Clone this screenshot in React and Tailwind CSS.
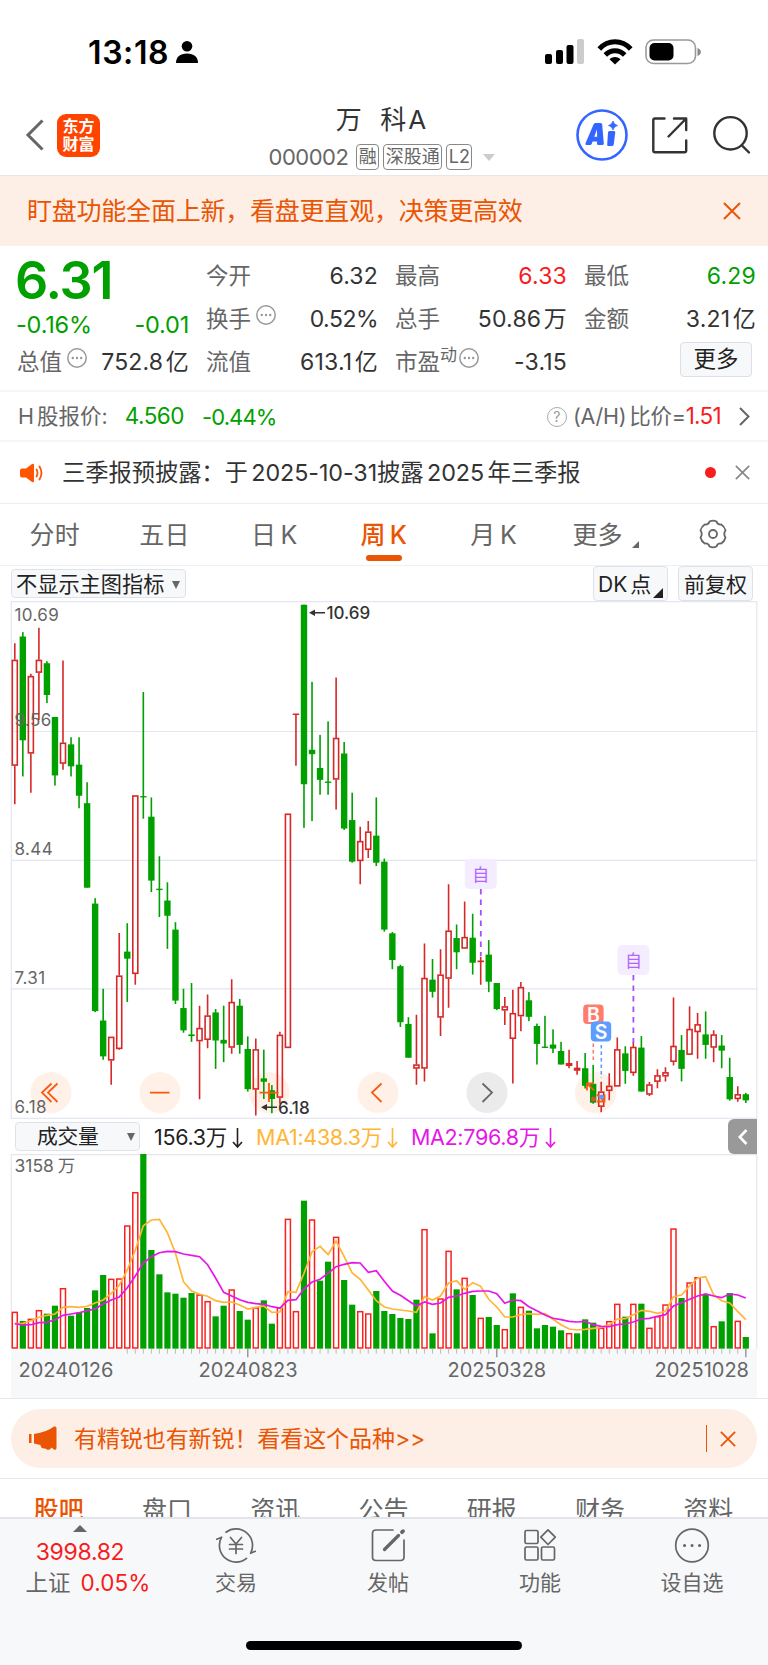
import clsx from "clsx";

const STEP = 8.033;
const FIRST_X = 14.8;

// [up, high, bodyTop, bodyBottom, low]
const CANDLES = [
  [1, 128, 177, 490, 604], [0, 95, 108, 415, 522], [1, 218, 225, 454, 570], [1, 82, 177, 215, 355],
  [0, 181, 187, 281, 305], [0, 346, 346, 519, 549], [1, 179, 422, 484, 502], [0, 406, 427, 492, 522],
  [0, 406, 487, 579, 616], [0, 539, 601, 851, 851], [0, 882, 898, 1216, 1219], [0, 1150, 1244, 1350, 1360],
  [1, 1292, 1292, 1362, 1434], [1, 985, 1111, 1328, 1330], [0, 956, 1040, 1061, 1189], [1, 578, 578, 1106, 1138],
  [0, 272, 580, 584, 647], [0, 584, 641, 830, 864], [0, 758, 854, 858, 938], [0, 835, 889, 934, 1032],
  [0, 953, 975, 1185, 1195], [0, 1150, 1207, 1273, 1280], [0, 1133, 1285, 1290, 1307], [1, 1200, 1266, 1305, 1477],
  [1, 1167, 1229, 1301, 1326], [0, 1210, 1220, 1303, 1387], [0, 1200, 1301, 1312, 1367], [1, 1122, 1189, 1324, 1342],
  [0, 1180, 1200, 1316, 1342], [0, 1291, 1328, 1447, 1454], [1, 1297, 1329, 1448, 1525], [0, 1330, 1415, 1425, 1476],
  [0, 1435, 1450, 1476, 1518], [1, 1277, 1286, 1472, 1490], [1, 632, 632, 1325, 1325], [1, 338, 338, 338, 490],
  [0, 14, 14, 545, 674], [0, 242, 443, 456, 654], [0, 399, 497, 532, 576], [0, 359, 537, 541, 576],
  [1, 229, 408, 531, 620], [0, 420, 454, 676, 680], [0, 570, 651, 774, 777], [1, 671, 713, 772, 841],
  [1, 654, 685, 739, 763], [0, 584, 697, 777, 787], [0, 765, 774, 975, 981], [0, 982, 986, 1065, 1092],
  [0, 1079, 1083, 1249, 1263], [0, 1234, 1254, 1354, 1354], [1, 1227, 1374, 1386, 1434], [1, 1016, 1118, 1386, 1424],
  [0, 1062, 1123, 1159, 1176], [1, 1033, 1108, 1235, 1290], [1, 841, 978, 1120, 1206], [0, 960, 1000, 1042, 1092],
  [1, 892, 997, 1031, 1031], [0, 928, 999, 1073, 1108], [1, 1055, 1069, 1069, 1138], [0, 1006, 1049, 1129, 1160],
  [0, 1133, 1133, 1210, 1213], [1, 1174, 1202, 1214, 1257], [1, 1153, 1222, 1298, 1430], [1, 1130, 1145, 1231, 1276],
  [0, 1160, 1184, 1233, 1246], [0, 1253, 1260, 1313, 1374], [0, 1230, 1321, 1325, 1325], [0, 1270, 1315, 1327, 1340],
  [0, 1307, 1334, 1374, 1374], [1, 1330, 1370, 1378, 1385], [1, 1364, 1384, 1392, 1404], [0, 1340, 1385, 1437, 1445],
  [0, 1375, 1431, 1487, 1490], [1, 1425, 1454, 1499, 1515], [1, 1400, 1437, 1452, 1480], [1, 1294, 1329, 1439, 1439],
  [0, 1320, 1341, 1393, 1431], [1, 1308, 1322, 1399, 1407], [0, 1290, 1324, 1454, 1454], [1, 1426, 1433, 1463, 1467],
  [1, 1388, 1406, 1425, 1444], [1, 1382, 1397, 1409, 1424], [1, 1176, 1319, 1366, 1377], [0, 1287, 1331, 1387, 1424],
  [1, 1202, 1269, 1345, 1345], [1, 1222, 1255, 1278, 1357], [0, 1217, 1285, 1316, 1357], [1, 1273, 1285, 1324, 1367],
  [0, 1287, 1318, 1333, 1385], [0, 1354, 1411, 1477, 1481], [1, 1438, 1462, 1476, 1484], [0, 1458, 1462, 1480, 1488],
];

// positive: up week, negative: down week
const VOLUMES = [
  605, -633, 626, 600, -611, -587, 534, -617, -608, -594, -541, -495, 506, 505, 346, 246, -132, -420, -493, -547,
  -551, -563, -549, 553, 573, -619, -587, 538, -603, -629, 592, -571, -641, 592, 326, 603, -272, 328, -512, -455,
  380, -510, -584, 603, 610, -543, -603, -612, -624, -627, -569, 357, -670, 565, 422, -538, 503, -555, 623, -621,
  -645, 657, -550, 590, -602, -655, -645, -650, -661, 669, -670, -628, -638, 653, 633, 581, -620, 581, -581, 653,
  618, 583, 355, -564, 517, 501, -552, 648, -634, -549, 632, -681,
];

const MA1 = [
  641, 640, 632, 622, 616, 612, 592, 590, 592, 589, 579, 570, 550, 526, 480, 420, 347, 330, 328, 368, 430, 515, 543,
  553, 559, 572, 577, 576, 585, 597, 592, 588, 607, 606, 545, 547, 490, 425, 409, 434, 393, 440, 489, 508, 540, 572,
  591, 597, 600, 603, 607, 560, 570, 558, 519, 512, 538, 518, 529, 568, 591, 621, 621, 614, 611, 613, 611, 628, 644,
  657, 660, 658, 655, 652, 644, 627, 626, 614, 601, 604, 610, 604, 560, 555, 528, 504, 500, 555, 572, 579, 605, 629,
];

const MA2 = [
  641, 645, 644, 638, 637, 629, 616, 612, 608, 602, 597, 582, 570, 561, 533, 498, 459, 440, 428, 424, 425, 432, 436,
  440, 464, 504, 547, 558, 569, 577, 581, 583, 590, 594, 571, 569, 537, 516, 508, 490, 470, 463, 458, 459, 487, 482,
  514, 543, 556, 572, 588, 576, 583, 579, 562, 558, 550, 544, 543, 543, 551, 580, 570, 572, 590, 602, 615, 625, 629,
  634, 636, 634, 644, 649, 650, 644, 642, 636, 627, 625, 619, 614, 588, 578, 568, 558, 552, 558, 563, 552, 555, 564,
];

const cx = (i) => FIRST_X + i * STEP;
const priceY = (v) => v / 2.958;
const volY = (v) => v / 3 - 44;

function StatusBar() {
  return (
    <div className="flex h-[104px] items-center justify-between pl-[88px] pr-[66px]">
      <div className="flex items-center gap-[7px]">
        <span className="pt-0.5 text-[32px] font-semibold tracking-[0.600px] text-black">13:18</span>
        <svg className="h-6 w-[22px]" viewBox="0 0 22 24">
          <circle cx="11" cy="6.2" r="5.3" />
          <path d="M0 23C0 17 4 13.500 11 13.500S22 17 22 23Z" />
        </svg>
      </div>
      <svg className="h-[26px] w-[157px]" viewBox="545 39 157 26">
        <rect x="545" y="54" width="7" height="10" rx="2" />
        <rect x="556" y="50" width="7" height="14" rx="2" />
        <rect x="566.500" y="45" width="7" height="19" rx="2" />
        <rect x="577" y="39" width="7" height="25" rx="2" fill="#ccc" />
        <g fill="none" stroke="#000" strokeWidth="5">
          <path d="M599.300 49C608 39.400 622 39.400 630.700 49" />
          <path d="M605.300 55C611 49.400 619 49.400 624.700 55" />
        </g>
        <path d="M609.500 59.300C613 56.300 617 56.300 620.500 59.300L615 64.500Z" />
        <rect x="646" y="40" width="49.500" height="23.500" rx="7.500" fill="none" stroke="#999" strokeWidth="1.600" />
        <rect x="649.500" y="43" width="24" height="17.500" rx="5" />
        <path d="M697.500 48C702 49.500 702 54.500 697.500 56Z" fill="#888" />
      </svg>
    </div>
  );
}

function Badge({ children }) {
  return (
    <span className="flex h-[26px] items-center rounded-[4px] border-[1.500px] border-[#888] px-[1.500px] text-[18px] text-[#666]">
      {children}
    </span>
  );
}

function Header() {
  return (
    <header className="flex h-[72px] items-center justify-between border-b border-[#e5e7ea] pl-[25px] pr-[17px]">
      <div className="flex w-[163px] items-center gap-[13px] pb-[9px]">
        <svg className="h-8 w-[19px]" viewBox="0 0 19 32" fill="none" stroke="#666" strokeWidth="3">
          <path d="M17.500 1.500L3 16L17.500 30.500" />
        </svg>
        <div className="flex h-[43px] w-[43px] flex-col items-center justify-center gap-[1.500px] rounded-[9px] bg-[#ff4400] text-[16px] font-bold text-white">
          <span>东方</span>
          <span>财富</span>
        </div>
      </div>
      <div className="flex flex-col items-center gap-[11px] pb-[2px]">
        <h1 className="text-[26px] tracking-[2px] text-[#333] [word-spacing:-1px]">万&nbsp; 科A</h1>
        <div className="flex items-center gap-1">
          <span className="mr-1 text-[22px] tracking-[-0.500px] text-[#666]">000002</span>
          <Badge>融</Badge>
          <Badge>深股通</Badge>
          <Badge>L2</Badge>
          <svg className="ml-[7px] h-[7px] w-3" viewBox="0 0 12 7" fill="#ccc">
            <path d="M0 0H12L6 7Z" />
          </svg>
        </div>
      </div>
      <svg className="mb-[9px] h-[52px] w-[175px]" viewBox="576 109 175 52" fill="none">
        <circle cx="602" cy="135" r="24.500" stroke="#3366ff" strokeWidth="2.600" />
        <g fill="#3366ff" fillRule="evenodd">
          <path d="M593.500 124.500Q594 123 595.500 123H600.500Q602 123 602.200 124.500L603.800 143.500Q603.800 145 602.200 145H598.500Q597 145 597 143.500V141.500H592.600L591.800 143.700Q591.300 145 590 145H586.500Q584.800 145 585.500 143.300ZM596.900 129.500L594.300 136.700H597.200Z" />
          <path d="M609.500 131H614Q615.500 131 615.300 132.500L613.700 144.500Q613.500 146 612 146H608.500Q607 146 607.200 144.500L608 132.500Q608.100 131 609.500 131Z" />
          <path d="M613 121Q613.900 124.600 617.500 125.500Q613.900 126.400 613 130Q612.100 126.400 608.500 125.500Q612.100 124.600 613 121Z" stroke="#3366ff" strokeWidth="0.800" />
        </g>
        <g stroke="#333" strokeWidth="2.400" strokeLinecap="round" strokeLinejoin="round">
          <path d="M664.500 118.500H655Q653.300 118.500 653.300 120.200V150.500Q653.300 152.200 655 152.200H684.500Q686.200 152.200 686.200 150.500V140.500" />
          <path d="M674 118.500H686.200V130M686.200 118.500L668.500 136.500" />
          <circle cx="730.500" cy="133.300" r="16.200" />
          <path d="M742 145.500L749 152.500" />
        </g>
      </svg>
    </header>
  );
}

function Cross({ className }) {
  return (
    <svg className={className} viewBox="0 0 18 18" fill="none" stroke="currentColor" strokeWidth="2">
      <path d="M1 1L17 17M17 1L1 17" />
    </svg>
  );
}

function Dots({ className }) {
  return (
    <svg className={clsx("mb-2 h-5 w-5", className)} viewBox="0 0 20 20" fill="#999">
      <circle cx="10" cy="10" r="9.200" fill="none" stroke="#999" strokeWidth="1.500" />
      <circle cx="5.800" cy="10" r="1.200" />
      <circle cx="10" cy="10" r="1.200" />
      <circle cx="14.200" cy="10" r="1.200" />
    </svg>
  );
}

function Cell({ label, value, unit, dots, sup, tone = "text-[#333]" }) {
  return (
    <div className="flex h-[43px] items-center justify-between pt-px">
      <span className="flex items-center text-[22.500px] text-[#666]">
        {label}
        {sup && <span className="mb-3.5 text-[17px]">{sup}</span>}
        {dots && <Dots className={sup ? "ml-[2px]" : "ml-[5px]"} />}
      </span>
      <span className={clsx("text-[23px]", value.endsWith("%") ? "tracking-[-0.500px]" : "tracking-[0.200px]", tone)}>
        {value}
        {unit && <span className="ml-[2.500px]">{unit}</span>}
      </span>
    </div>
  );
}

function Quote() {
  return (
    <section className="grid h-[146px] grid-cols-4 gap-x-[17px] border-b-2 border-[#f5f6f8] pl-[17px] pr-3 pt-2">
      <div>
        <div className="flex h-[50px] items-center pt-[3px] text-[52px] font-semibold tracking-[-1.200px] text-[#00a000]">
          <span className="-ml-0.5">6.31</span>
        </div>
        <div className="flex h-[36px] items-center justify-between pt-[5px] text-[23.500px] tracking-[-0.200px] text-[#00a000]">
          <span className="-ml-px">-0.16%</span>
          <span>-0.01</span>
        </div>
        <Cell label="总值" value="752.8" unit="亿" dots />
      </div>
      <div>
        <Cell label="今开" value="6.32" />
        <Cell label="换手" value="0.52%" dots />
        <Cell label="流值" value="613.1" unit="亿" />
      </div>
      <div>
        <Cell label="最高" value="6.33" tone="text-[#f81c1c]" />
        <Cell label="总手" value="50.86" unit="万" />
        <Cell label="市盈" sup="动" value="-3.15" dots />
      </div>
      <div>
        <Cell label="最低" value="6.29" tone="text-[#00a000]" />
        <Cell label="金额" value="3.21" unit="亿" />
        <div className="flex h-[43px] items-center justify-end pb-1 pr-1">
          <button className="h-[35px] w-[72px] rounded-[4px] border-[1.500px] border-[#dcdfe5] bg-[#f7f8fa] text-[22.500px] text-[#222]">更多</button>
        </div>
      </div>
    </section>
  );
}

function HShareRow() {
  return (
    <section className="flex h-[50px] items-center border-b-2 border-[#f5f6f8] pl-[18px] pr-[18px] pt-px text-[21.500px] text-[#666]">
      <span className="[word-spacing:-3px]">H 股报价:</span>
      <span className="ml-[17px] text-[22.500px] tracking-[-0.500px] text-[#00a000]">4.560</span>
      <span className="ml-[18px] text-[22px] tracking-[-0.900px] text-[#00a000]">-0.44%</span>
      <span className="ml-auto mr-1.5 flex h-5 w-5 items-center justify-center rounded-full border-[1.500px] border-[#aaa] text-[14px] text-[#999]">?</span>
      <span className="tracking-[-0.250px] [word-spacing:-3px]">(A/H) 比价=</span>
      <span className="text-[22.500px] tracking-[-0.700px] text-[#f81c1c]">1.51</span>
      <svg className="ml-[18px] h-[19px] w-[11px]" viewBox="0 0 11 19" fill="none" stroke="#666" strokeWidth="2">
        <path d="M1 1L9.500 9.500L1 18" />
      </svg>
    </section>
  );
}

function Notice() {
  return (
    <section className="flex h-[62px] items-center border-b border-[#eceef1] pl-5 pr-[18px] text-[#333]">
      <svg className="mr-[19px] h-5 w-[23px]" viewBox="0 0 23 20" fill="#ff5500">
        <path d="M2 5.500H6L12 1Q14 0 14 2V18Q14 20 12 19L6 14.500H2Q0 14.500 0 12.500V7.500Q0 5.500 2 5.500Z" />
        <path d="M16.500 6.500Q18.500 10 16.500 13.500M19.500 3.500Q23.500 10 19.500 16.500" fill="none" stroke="#ff5500" strokeWidth="1.800" strokeLinecap="round" />
      </svg>
      <span className="text-[23.300px] tracking-[-0.070px] [word-spacing:-3px]">三季报预披露：于 2025-10-31披露 2025 年三季报</span>
      <span className="ml-auto mr-[19px] h-[11px] w-[11px] rounded-full bg-[#f81c1c]" />
      <Cross className="h-[15px] w-[15px] text-[#888]" />
    </section>
  );
}

const PERIODS = ["分时", "五日", "日 K", "周 K", "月 K"];

function PeriodTabs() {
  return (
    <nav className="grid h-[62px] grid-cols-7 border-b border-[#eef0f3] text-[25px] text-[#666]">
      {PERIODS.map((p) => (
        <div key={p} className="flex flex-col items-center">
          <span className={clsx("pt-[19px] tracking-[0.300px] [word-spacing:-3px]", p === "周 K" && "font-medium text-[#ea5504]")}>{p}</span>
          {p === "周 K" && <span className="mt-[7px] h-1.5 w-9 rounded-sm bg-[#ea5504]" />}
        </div>
      ))}
      <div className="flex items-start justify-center gap-2.5 pl-[5px] pt-[19px]">
        <span>更多</span>
        <svg className="mt-[18px] h-[7px] w-[7px]" viewBox="0 0 7 7" fill="#666">
          <path d="M7 0V7H0Z" />
        </svg>
      </div>
      <div className="flex items-start justify-center pt-[15px]">
        <svg className="h-[30px] w-[30px]" viewBox="0 0 30 30" fill="none" stroke="#666" strokeWidth="1.800" strokeLinejoin="round">
          <path d="M11.500 2.500Q15 .800 18.500 2.500Q19.500 6 23.300 5.500Q26.500 7.500 27.500 11.500Q25 15 27.500 18.500Q26.500 22.500 23.300 24.500Q19.500 24 18.500 27.500Q15 29.200 11.500 27.500Q10.500 24 6.700 24.500Q3.500 22.500 2.500 18.500Q5 15 2.500 11.500Q3.500 7.500 6.700 5.500Q10.500 6 11.500 2.500Z" />
          <circle cx="15" cy="15" r="4" />
        </svg>
      </div>
    </nav>
  );
}

function ChartOptions() {
  const box = "flex items-center rounded-[4px] border-[1.500px] border-[#dfe2e8] bg-[#f7f8fa] text-[#222]";
  return (
    <div className="flex h-[35px] items-center pl-[11px] pr-[15px]">
      <button className={clsx(box, "h-[29px] w-[175px] justify-between px-1 pt-0.5 text-[21.200px]")}>
        不显示主图指标
        <svg className="mr-px h-[8px] w-[8px]" viewBox="0 0 8 8" fill="#666">
          <path d="M0 0H8L4 8Z" />
        </svg>
      </button>
      <button className={clsx(box, "relative ml-auto h-[35px] w-[75px] px-1 pt-0.5 text-[21px] [word-spacing:-3px]")}>
        DK 点
        <svg className="absolute bottom-[2px] right-[4px] h-2.5 w-2.5" viewBox="0 0 10 10" fill="#222">
          <path d="M10 0V10H0Z" />
        </svg>
      </button>
      <button className={clsx(box, "ml-2.5 h-[35px] w-[75px] justify-center pt-0.5 text-[21px]")}>前复权</button>
    </div>
  );
}

function Candle({ i, data }) {
  const [up, ...v] = data;
  const [high, top, bottom, low] = v.map(priceY);
  const x = cx(i);
  if (!up) {
    return (
      <g fill="#00a000">
        <rect x={x - 0.8} y={high} width="1.600" height={low - high} />
        <rect x={x - 3.2} y={top} width="6.400" height={bottom - top} />
      </g>
    );
  }
  if (top === bottom) {
    return <path d={`M${x - 3.2} ${top}H${x + 3.2}M${x} ${high}V${low}`} stroke="#d62828" strokeWidth="1.600" />;
  }
  return (
    <g fill="none" stroke="#d62828" strokeWidth="1.600">
      <path d={`M${x} ${high}V${top}M${x} ${bottom}V${low}`} />
      <rect x={x - 2.5} y={top + 0.6} width="5" height={bottom - top - 1.2} />
    </g>
  );
}

const PRICE_LABELS = [
  ["10.69", 21],
  ["9.56", 125.5],
  ["8.44", 254.5],
  ["7.31", 383.5],
  ["6.18", 513],
];

function WatchTag({ x, y, end }) {
  return (
    <g>
      <rect x={x - 16} y={y} width="32" height="30" rx="5" fill="#f4ecff" />
      <text x={x} y={y + 21.500} textAnchor="middle" fontSize="17" fill="#b266ff">自</text>
      <path d={`M${x} ${y + 30}V${end}`} stroke="#a64dff" strokeWidth="1.800" strokeDasharray="5.500 5" />
    </g>
  );
}

function PriceChart() {
  return (
    <svg className="block h-[518px] w-full" viewBox="0 1 768 518">
      <g stroke="#e3e6f0" strokeWidth="1.200" fill="none">
        <rect x="11.300" y="1.600" width="745.500" height="516.700" />
        <path d="M11.300 131.500H756.800M11.300 260.300H756.800M11.300 388.800H756.800" />
      </g>
      <g fill="#fff0e8">
        {[51, 160, 269, 378, 595.5].map((x) => (
          <circle key={x} cx={x} cy="492.600" r="20.500" />
        ))}
        <circle cx="487" cy="492.600" r="20.500" fill="#ebebeb" />
      </g>
      {CANDLES.map((c, i) => (
        <Candle key={i} i={i} data={c} />
      ))}
      <g fill="none" stroke="#f95a0e" strokeWidth="1.800">
        <path d="M51.500 483.500L42 492.600L51.500 502M57.500 483.500L48 492.600L57.500 502" />
        <path d="M150 492.600H169.500M259.500 492.600H278.500M269 483V502" />
        <path d="M381.500 483.500L372 492.600L381.500 502" />
        <path d="M587 490.500V483.500H594M587 483.500L594 490.500M597 501.500H604.500V494.500M604.500 501.500L597 494.500" />
        <path d="M482.500 483.500L492 492.600L482.500 502" stroke="#666" />
      </g>
      <circle cx="593.500" cy="499" r="2.500" fill="#e24a3b" />
      <circle cx="601.500" cy="497" r="2.500" fill="#5c9dff" />
      <g fontSize="17" fill="#666" letterSpacing=".400">
        {PRICE_LABELS.map(([t, y]) => (
          <text key={t} x="14.500" y={y}>{t}</text>
        ))}
      </g>
      <g fontSize="17" fontWeight="500" fill="#333">
        <text x="326.500" y="19">10.69</text>
        <text x="278" y="514">6.18</text>
        <path d="M309 12.800L315 9.500V12H325V13.600H315V16Z" />
        <path d="M261 507.300L267 504V506.500H277V508.100H267V510.600Z" />
      </g>
      <WatchTag x={480.8} y={259} end={356} />
      <WatchTag x={633.4} y={345} end={443} />
      <path d="M593.300 424V461" stroke="#ff7b6b" strokeWidth="1.600" strokeDasharray="3.500 3" />
      <path d="M601.300 445V478" stroke="#5c9dff" strokeWidth="1.600" strokeDasharray="3.500 3" />
      <g fontSize="19.500" fontWeight="600" fill="#fff" textAnchor="middle">
        <rect x="583.200" y="404.600" width="20.400" height="19.500" rx="4" fill="#ff7b6b" />
        <text x="593.400" y="421.500">B</text>
        <rect x="590.800" y="421.600" width="20.400" height="20" rx="4" fill="#5c9dff" />
        <text x="601" y="438.700">S</text>
      </g>
    </svg>
  );
}

function VolumeHeader() {
  return (
    <div className="flex h-[35px] items-center pl-[15px] pr-[11px] text-[21.500px] tracking-[-0.300px]">
      <button className="flex h-[29px] w-[125px] items-center justify-between rounded-[4px] border-[1.500px] border-[#dfe2e8] bg-[#f7f8fa] pl-[21px] pr-1 pt-px text-[20.800px] text-[#222]">
        成交量
        <svg className="h-2 w-2" viewBox="0 0 8 8" fill="#666">
          <path d="M0 0H8L4 8Z" />
        </svg>
      </button>
      <VolumeStat className="ml-[14px] text-[#222]">156.3万</VolumeStat>
      <VolumeStat className="ml-[13px] text-[#ffb535]">MA1:438.3万</VolumeStat>
      <VolumeStat className="ml-[13px] text-[#e815e8]">MA2:796.8万</VolumeStat>
      <button className="ml-auto flex h-[35px] w-[29px] items-center justify-center rounded-l-[6px] bg-[#999]">
        <svg className="h-4 w-2.5" viewBox="0 0 10 16" fill="none" stroke="#fff" strokeWidth="2.600">
          <path d="M8.500 1L1.800 8L8.500 15" />
        </svg>
      </button>
    </div>
  );
}

function VolumeStat({ className, children }) {
  return (
    <span className={clsx("flex items-center gap-[5px] pt-0.5", className)}>
      {children}
      <svg className="h-5 w-[11px]" viewBox="0 0 11 20" fill="none" stroke="currentColor" strokeWidth="1.600">
        <path d="M5.500 0V19M1 14L5.500 19L10 14" />
      </svg>
    </span>
  );
}

const linePath = (values) => values.map((v, i) => `${i ? "L" : "M"}${cx(i).toFixed(1)} ${volY(v).toFixed(1)}`).join("");

function VolumeChart() {
  const base = volY(716);
  return (
    <svg className="block h-[244px] w-full" viewBox="0 0 768 244">
      <rect x="11" y={base} width="746" height="50" fill="#f7f8fa" />
      <path d={`M11.300 ${base}V.600H756.800V${base}`} fill="none" stroke="#e3e6ea" strokeWidth="1.200" />
      <text x="14.500" y="18" fontSize="17.500" fill="#666" wordSpacing="-1">3158 万</text>
      {VOLUMES.map((v, i) => {
        const y = volY(Math.abs(v));
        return v < 0 ? (
          <rect key={i} x={cx(i) - 3.1} y={y} width="6.200" height={base - y} fill="#00a000" />
        ) : (
          <rect key={i} x={cx(i) - 2.5} y={y + 0.7} width="5" height={base - y - 1.4} fill="#fff" stroke="#fb2020" strokeWidth="1.500" />
        );
      })}
      {VOLUMES.map((_, i) => {
        const major = i === 29 || i === 60 || i === 91;
        return i < 14 ? null : (
          <path key={i} d={`M${cx(i)} ${base}v${major ? 8.5 : 5}`} stroke={major ? "#999" : "#bbb"} strokeWidth={major ? 1.5 : 1} />
        );
      })}
      <path d={linePath(MA1)} fill="none" stroke="#ffb535" strokeWidth="1.700" />
      <path d={linePath(MA2)} fill="none" stroke="#e815e8" strokeWidth="1.700" />
      <g fontSize="20" fill="#666">
        <text x="18.500" y="223">20240126</text>
        <text x="198.500" y="223">20240823</text>
        <text x="447.500" y="223">20250328</text>
        <text x="654.500" y="223">20251028</text>
      </g>
    </svg>
  );
}

function Promo() {
  return (
    <div className="h-[81px] border-y border-[#e5e7ea] px-[11px] pt-2.5">
      <div className="flex h-[59px] items-center rounded-[30px] bg-[#fdeee6] pl-[18px] pr-[21px] text-[#ea5504]">
        <svg className="h-[25px] w-[28px]" viewBox="0 0 28 25" fill="#ea5504">
          <path d="M0 8H2.500V17H0ZM5 8Q18 6 25 0.500Q27.500 0 27.500 2V22Q27.500 24.500 25 23.500L22.500 21.500Q21 24.500 18 23.500L16 22.500Q12 23 11.500 19L5 17.500Z" />
        </svg>
        <span className="ml-[17px] pt-0.5 text-[23px] tracking-[-0.080px]">有精锐也有新锐！看看这个品种&gt;&gt;</span>
        <span className="ml-auto mr-[13px] h-[27px] w-[1.500px] bg-[#ea5504]" />
        <Cross className="h-4 w-4" />
      </div>
    </div>
  );
}

const SECTIONS = ["股吧", "盘口", "资讯", "公告", "研报", "财务", "资料"];

function SectionTabs() {
  return (
    <nav className="grid h-[38px] grid-cols-7 overflow-hidden px-[5px] pt-[19px] text-center text-[25px] text-[#666]">
      {SECTIONS.map((s, i) => (
        <span key={s} className={clsx("-ml-px", i === 0 && "font-medium text-[#ea5504]")}>{s}</span>
      ))}
    </nav>
  );
}

const ACTIONS = [
  {
    label: "交易",
    icon: (
      <>
        <path d="M9 5.200A16.600 16.600 0 0 1 33.600 26.300L38.300 24.300" />
        <path d="M29.500 31.300A16.600 16.600 0 0 1 4.600 10.200L-.300 12.200" />
        <path d="M13.500 10.500L19 17L24.500 10.500M19 17V26.500M12.500 17.500H25.500M12.500 22H25.500" />
      </>
    ),
  },
  {
    label: "发帖",
    icon: (
      <>
        <path d="M24 3H7Q3.500 3 3.500 6.500V30Q3.500 33.500 7 33.500H31.500Q35 33.500 35 30V13" />
        <path d="M15.500 22.500L29.500 8.500" strokeWidth="3.200" />
        <path d="M33 5.200L34 4.200" strokeWidth="3.800" />
      </>
    ),
  },
  {
    label: "功能",
    icon: (
      <>
        <rect x="4" y="3.500" width="13" height="13" rx="1.500" />
        <rect x="4" y="20" width="13" height="13" rx="1.500" />
        <rect x="20.500" y="20" width="13" height="13" rx="1.500" />
        <path d="M27 2.800L34.300 10.200L27 17.500L19.800 10.200Z" />
      </>
    ),
  },
  {
    label: "设自选",
    icon: (
      <>
        <circle cx="19" cy="18.500" r="16.300" />
        <path d="M11.500 18.500h.1M19 18.500h.1M26.500 18.500h.1" strokeWidth="3" />
      </>
    ),
  },
];

function BottomBar() {
  return (
    <footer className="h-[148px] border-t-2 border-[#e3e5ea] bg-[#f7f8fa]">
      <div className="flex h-[122px] text-[21px] text-[#666]">
        <div className="flex w-[160px] flex-col items-center pt-1.5">
          <svg className="h-[7px] w-3.5" viewBox="0 0 14 7" fill="#666">
            <path d="M0 7L7 0L14 7Z" />
          </svg>
          <span className="mt-[9px] text-[23px] tracking-[-0.300px] text-[#f81c1c]">3998.82</span>
          <span className="mt-2 flex items-center gap-2.5 pl-4 text-[22.500px]">
            上证 <span className="tracking-[0.100px] text-[#f81c1c]">0.05%</span>
          </span>
        </div>
        {ACTIONS.map((a) => (
          <div key={a.label} className="flex w-[152px] flex-col items-center pt-2">
            <svg className="h-[38px] w-[40px]" viewBox="-1 0 40 38" fill="none" stroke="#666" strokeWidth="1.700" strokeLinecap="round" strokeLinejoin="round">
              {a.icon}
            </svg>
            <span className="mt-[7px]">{a.label}</span>
          </div>
        ))}
      </div>
      <div className="mx-auto h-[9px] w-[276px] rounded-full bg-black" />
    </footer>
  );
}

export default function App() {
  return (
    <div className="flex h-[1665px] w-[768px] flex-col overflow-hidden bg-white font-['Inter','Noto_Sans_CJK_SC',sans-serif] leading-none">
      <StatusBar />
      <Header />
      <div className="flex h-[70px] items-center justify-between bg-[#fdeee6] pl-[27px] pr-[27px] text-[25px] tracking-[-0.220px] text-[#ea5504]">
        <span className="pt-px">盯盘功能全面上新，看盘更直观，决策更高效</span>
        <Cross className="h-[18px] w-[18px]" />
      </div>
      <Quote />
      <HShareRow />
      <Notice />
      <PeriodTabs />
      <ChartOptions />
      <PriceChart />
      <VolumeHeader />
      <VolumeChart />
      <Promo />
      <SectionTabs />
      <BottomBar />
    </div>
  );
}
